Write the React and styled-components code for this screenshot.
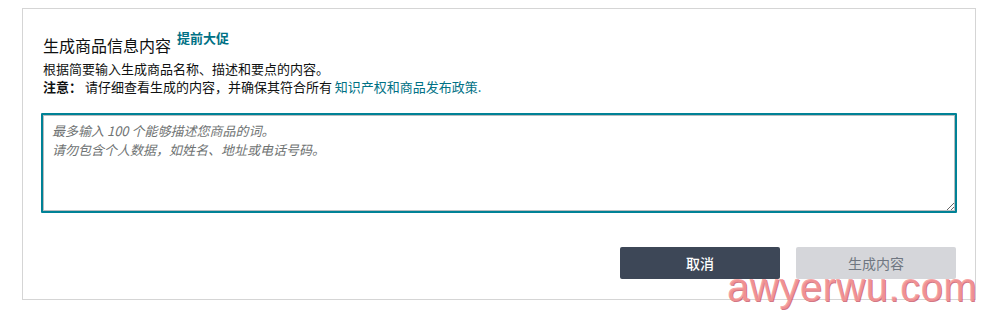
import React from 'react';
import styled, { createGlobalStyle } from 'styled-components';

const Global = createGlobalStyle`
  html, body {
    margin: 0;
    background: #fff;
  }
  body {
    font-family: 'Noto Sans CJK SC', 'Liberation Sans', sans-serif;
    color: #0f1111;
  }
`;

const Page = styled.div`
  position: relative;
  width: 1003px;
  height: 319px;
  padding: 8px 0 0 22px;
  box-sizing: border-box;
  overflow: hidden;
`;

const Panel = styled.section`
  width: 954px;
  box-sizing: border-box;
  border: 1px solid #d5d5d5;
  padding: 24px 18px 20px 18px;
  display: flex;
  flex-direction: column;
`;

const Header = styled.div`
  display: flex;
  align-items: flex-start;
  gap: 6px;
  padding-left: 2px;
`;

const Title = styled.h2`
  margin: 0;
  font-size: 16px;
  line-height: 24px;
  font-weight: 400;
  color: #0f1111;
`;

const Tag = styled.span`
  margin-top: -3px;
  font-size: 13px;
  line-height: 16px;
  font-weight: 700;
  color: #007185;
`;

const Desc = styled.p`
  margin: 3px 0 0 2px;
  font-size: 13px;
  line-height: 18px;
  color: #0f1111;
`;

const Strong = styled.b`
  font-weight: 700;
`;

const Policy = styled.a`
  color: #007185;
  text-decoration: none;
`;

const Input = styled.textarea`
  margin-top: 17px;
  height: 100px;
  width: 100%;
  box-sizing: border-box;
  padding: 6px 9px;
  border: 2px solid #008296;
  box-shadow: inset 0 0 0 1px #b9bcbe;
  border-radius: 1px;
  outline: none;
  resize: vertical;
  font-family: inherit;
  font-size: 13px;
  line-height: 19px;
  color: #0f1111;

  &::placeholder {
    color: #6f7373;
    font-style: italic;
  }
`;

const Actions = styled.div`
  margin-top: 34px;
  display: flex;
  justify-content: flex-end;
  gap: 16px;
  padding-right: 1px;
`;

const Button = styled.button`
  width: 160px;
  height: 32px;
  border: none;
  border-radius: 2px;
  font-family: inherit;
  font-size: 14px;
  font-weight: ${(p) => (p.$primary ? 500 : 400)};
  background: ${(p) => (p.$primary ? '#3d4757' : '#d5d6da')};
  color: ${(p) => (p.$primary ? '#ffffff' : '#6f7681')};
  cursor: ${(p) => (p.disabled ? 'default' : 'pointer')};
`;

const Watermark = styled.span`
  position: absolute;
  left: 727px;
  top: 267px;
  font-family: 'Liberation Sans', Arial, sans-serif;
  font-size: 40px;
  line-height: 40px;
  letter-spacing: 0.5px;
  color: rgba(245, 150, 150, 0.85);
  text-shadow: 1px 1px 0 rgba(190, 60, 80, 0.7);
  pointer-events: none;
`;

export default function App() {
  return (
    <Page>
      <Global />
      <Panel>
        <Header>
          <Title>生成商品信息内容</Title>
          <Tag>提前大促</Tag>
        </Header>
        <Desc>
          根据简要输入生成商品名称、描述和要点的内容。
          <br />
          <Strong>注意：</Strong> 请仔细查看生成的内容，并确保其符合所有{' '}
          <Policy href="#">知识产权和商品发布政策.</Policy>
        </Desc>
        <Input
          autoFocus
          placeholder={'最多输入 100 个能够描述您商品的词。\n请勿包含个人数据，如姓名、地址或电话号码。'}
        />
        <Actions>
          <Button $primary>取消</Button>
          <Button disabled>生成内容</Button>
        </Actions>
      </Panel>
      <Watermark>awyerwu.com</Watermark>
    </Page>
  );
}
